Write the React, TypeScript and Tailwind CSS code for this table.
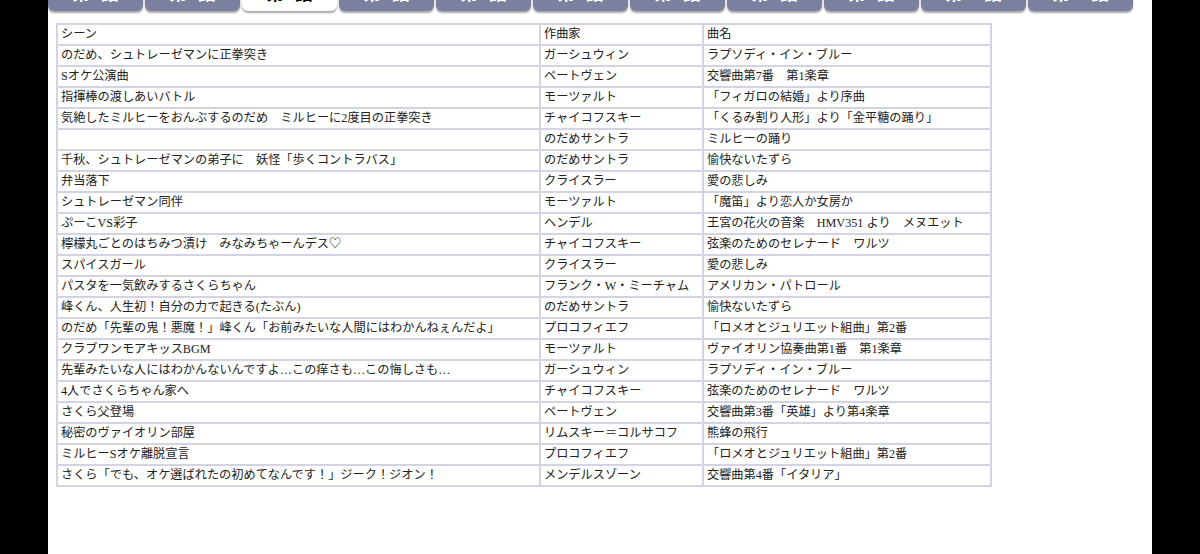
import React from "react";

const rows: [string, string, string][] = [
  ["のだめ、シュトレーゼマンに正拳突き", "ガーシュウィン", "ラプソディ・イン・ブルー"],
  ["Sオケ公演曲", "ベートヴェン", "交響曲第7番　第1楽章"],
  ["指揮棒の渡しあいバトル", "モーツァルト", "「フィガロの結婚」より序曲"],
  ["気絶したミルヒーをおんぶするのだめ　ミルヒーに2度目の正拳突き", "チャイコフスキー", "「くるみ割り人形」より「金平糖の踊り」"],
  ["", "のだめサントラ", "ミルヒーの踊り"],
  ["千秋、シュトレーゼマンの弟子に　妖怪「歩くコントラバス」", "のだめサントラ", "愉快ないたずら"],
  ["弁当落下", "クライスラー", "愛の悲しみ"],
  ["シュトレーゼマン同伴", "モーツァルト", "「魔笛」より恋人か女房か"],
  ["ぷーこVS彩子", "ヘンデル", "王宮の花火の音楽　HMV351 より　メヌエット"],
  ["檸檬丸ごとのはちみつ漬け　みなみちゃーんデス♡", "チャイコフスキー", "弦楽のためのセレナード　ワルツ"],
  ["スパイスガール", "クライスラー", "愛の悲しみ"],
  ["パスタを一気飲みするさくらちゃん", "フランク・W・ミーチャム", "アメリカン・パトロール"],
  ["峰くん、人生初！自分の力で起きる(たぶん)", "のだめサントラ", "愉快ないたずら"],
  ["のだめ「先輩の鬼！悪魔！」峰くん「お前みたいな人間にはわかんねぇんだよ」", "プロコフィエフ", "「ロメオとジュリエット組曲」第2番"],
  ["クラブワンモアキッスBGM", "モーツァルト", "ヴァイオリン協奏曲第1番　第1楽章"],
  ["先輩みたいな人にはわかんないんですよ…この痒さも…この悔しさも…", "ガーシュウィン", "ラプソディ・イン・ブルー"],
  ["4人でさくらちゃん家へ", "チャイコフスキー", "弦楽のためのセレナード　ワルツ"],
  ["さくら父登場", "ベートヴェン", "交響曲第3番「英雄」より第4楽章"],
  ["秘密のヴァイオリン部屋", "リムスキー＝コルサコフ", "熊蜂の飛行"],
  ["ミルヒーSオケ離脱宣言", "プロコフィエフ", "「ロメオとジュリエット組曲」第2番"],
  ["さくら「でも、オケ選ばれたの初めてなんです！」ジーク！ジオン！", "メンデルスゾーン", "交響曲第4番「イタリア」"],
];

const tabs = ["第1話", "第2話", "第3話", "第4話", "第5話", "第6話", "第7話", "第8話", "第9話", "第10話", "第11話"];

export default function App() {
  const cell = "border-2 border-[#d3d3e4] pl-[3px] py-0 h-[21px] leading-[17px] whitespace-nowrap text-left font-normal align-middle";
  return (
    <div className="w-[1200px] h-[554px] bg-black overflow-hidden">
      <div
        className="w-[1104px] h-[554px] mx-auto bg-white overflow-hidden"
        style={{ fontFamily: '"Liberation Serif", "Noto Sans CJK JP", serif' }}
      >
        <div className="flex gap-[2px] -mt-[25px]">
          {tabs.map((t, i) => (
            <div
              key={t}
              className={`${i >= 9 ? "w-[105px]" : "w-[95px]"} h-[36px] rounded-b-[6px] flex items-end justify-center pb-[9px] text-[18px] leading-[20px] font-bold shadow-[0_2px_2px_rgba(0,0,0,0.35)] ${
                i === 2 ? "bg-white text-black" : "bg-[#7a809d] text-white"
              }`}
              style={{ fontFamily: '"Noto Sans CJK JP", sans-serif' }}
            >
              {t}
            </div>
          ))}
        </div>
        <div className="pl-[8px] pt-[12px]">
          <table className="border-collapse border-2 border-[#d3d3e4] text-[12.2px] text-[#222]">
            <colgroup>
              <col className="w-[483px]" />
              <col className="w-[163px]" />
              <col className="w-[288px]" />
            </colgroup>
            <thead>
              <tr>
                <th className={cell}>シーン</th>
                <th className={cell}>作曲家</th>
                <th className={cell}>曲名</th>
              </tr>
            </thead>
            <tbody>
              {rows.map((r, i) => (
                <tr key={i}>
                  <td className={cell}>{r[0]}</td>
                  <td className={cell}>{r[1]}</td>
                  <td className={cell}>{r[2]}</td>
                </tr>
              ))}
            </tbody>
          </table>
        </div>
      </div>
    </div>
  );
}
